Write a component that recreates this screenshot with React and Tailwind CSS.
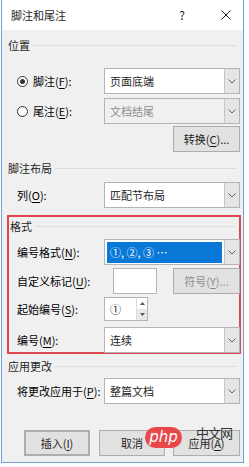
import React from 'react';

const font = { fontFamily: '"Noto Sans CJK SC", "Microsoft YaHei", sans-serif' };

const Arrow = () => (
  <div className="w-[15px] h-full bg-[#e5e5e5] border-l border-[#c4c4c4] flex items-center justify-center">
    <svg width="8" height="5" viewBox="0 0 8 5"><path d="M0.5 0.5 L4 4 L7.5 0.5" fill="none" stroke="#606060" strokeWidth="1" /></svg>
  </div>
);

const Combo = ({ text, disabled, selected, className = '' }) => (
  <div className={`ml-auto w-[136px] h-[26px] border border-[#b4b4b4] flex ${disabled ? 'bg-[#f0f0f0]' : 'bg-white'} ${className}`}>
    <div className="flex-1 flex items-center px-[2px]">
      {selected ? (
        <div className="w-full h-[21px] bg-[#0a78d7] text-white flex items-center px-[3px]">{text}</div>
      ) : (
        <span className={`px-[3px] ${disabled ? 'text-[#8d8d8d]' : 'text-[#1e1e1e]'}`}>{text}</span>
      )}
    </div>
    <Arrow />
  </div>
);

const Section = ({ label, className = '' }) => (
  <div className={`flex items-center gap-[3px] pr-[4px] ${className}`}>
    <span className="text-[#1e1e1e] leading-[14px]">{label}</span>
    <div className="flex-1 h-px bg-[#dcdcdc]" />
  </div>
);

const Button = ({ children, className = '' }) => (
  <div className={`h-[26px] bg-[#e1e1e1] border border-[#adadad] flex items-center justify-center text-[#1e1e1e] ${className}`}>{children}</div>
);

const Radio = ({ checked }) => (
  <div className="w-[11px] h-[11px] rounded-full border border-[#333] bg-white flex items-center justify-center">
    {checked && <div className="w-[5px] h-[5px] rounded-full bg-[#333]" />}
  </div>
);

const U = ({ children }) => <span className="underline underline-offset-2">{children}</span>;

export default function App() {
  return (
    <div className="w-[249px] h-[467px] bg-white relative text-[11px]" style={font}>
      <div className="ml-[1px] w-[243px] h-[463px] border-l border-r border-b border-[#6ea1dc] flex flex-col">
        {/* title bar */}
        <div className="h-[30px] bg-white flex items-center pl-[9px] text-[#1e1e1e]">
          <span className="text-[11px]">脚注和尾注</span>
          <span className="ml-auto mr-[36px] text-[12px]">?</span>
          <svg className="mr-[12px]" width="10" height="10" viewBox="0 0 10 10"><path d="M0.5 0.5 L9.5 9.5 M9.5 0.5 L0.5 9.5" stroke="#222" strokeWidth="1" /></svg>
        </div>

        {/* body */}
        <div className="flex-1 bg-[#f0f0f0] pl-[6px] pr-[2px] flex flex-col">
          <Section label="位置" className="mt-[8px]" />

          <div className="mt-[16px] flex items-center pr-[1px]">
            <div className="ml-[9px]"><Radio checked /></div>
            <span className="ml-[5px]">脚注(<U>F</U>):</span>
            <Combo text="页面底端" />
          </div>
          <div className="mt-[4px] flex items-center pr-[1px]">
            <div className="ml-[9px]"><Radio /></div>
            <span className="ml-[5px]">尾注(<U>E</U>):</span>
            <Combo text="文档结尾" disabled />
          </div>
          <div className="mt-[2px] flex pr-[1px]">
            <Button className="ml-auto w-[67px]">转换(<U>C</U>)...</Button>
          </div>

          <Section label="脚注布局" className="mt-[9px]" />
          <div className="mt-[7px] flex items-center pr-[1px]">
            <span className="ml-[9px]">列(<U>O</U>):</span>
            <Combo text="匹配节布局" />
          </div>

          {/* highlighted format section */}
          <div className="mt-[7px] -ml-[1px] h-[139px] border-2 border-[#e0464f] pl-[1px] flex flex-col">
            <Section label="格式" className="mt-[2px]" />
            <div className="mt-[6px] flex items-center">
              <span className="ml-[7px]">编号格式(<U>N</U>):</span>
              <Combo text="①, ②, ③ …" selected className="mr-[-1px]" />
            </div>
            <div className="mt-[3px] flex items-center">
              <span className="ml-[7px]">自定义标记(<U>U</U>):</span>
              <div className="ml-[23px] w-[44px] h-[26px] bg-white border border-[#b4b4b4]" />
              <Button className="ml-auto mr-[-1px] w-[67px] text-[#8d8d8d]">符号(<U>Y</U>)...</Button>
            </div>
            <div className="mt-[3px] flex items-center">
              <span className="ml-[7px]">起始编号(<U>S</U>):</span>
              <div className="ml-auto mr-[91px] w-[44px] h-[24px] bg-white border border-[#b4b4b4] flex">
                <span className="flex-1 flex items-center pl-[5px] text-[#1e1e1e]">①</span>
                <div className="w-[11px] flex flex-col border-l border-[#dcdcdc]">
                  <div className="flex-1 flex items-center justify-center">
                    <svg width="5" height="3" viewBox="0 0 5 3"><path d="M0 3 L2.5 0 L5 3Z" fill="#555" /></svg>
                  </div>
                  <div className="flex-1 flex items-center justify-center bg-[#e8e8e8]">
                    <svg width="5" height="3" viewBox="0 0 5 3"><path d="M0 0 L2.5 3 L5 0Z" fill="#555" /></svg>
                  </div>
                </div>
              </div>
            </div>
            <div className="mt-[6px] flex items-center">
              <span className="ml-[7px]">编号(<U>M</U>):</span>
              <Combo text="连续" className="mr-[-1px] h-[24px]" />
            </div>
          </div>

          <Section label="应用更改" className="mt-[5px]" />
          <div className="mt-[5px] flex items-center pr-[1px]">
            <span className="ml-[9px]">将更改应用于(<U>P</U>):</span>
            <Combo text="整篇文档" />
          </div>

          <div className="mt-[26px] flex pr-[1px]">
            <Button className="ml-[16px] w-[66px] border-2 border-[#0a6fc9]">插入(<U>I</U>)</Button>
            <Button className="ml-[9px] w-[66px]">取消</Button>
            <Button className="ml-auto w-[67px]">应用(<U>A</U>)</Button>
          </div>
        </div>
      </div>

      {/* watermark */}
      <div className="absolute left-[145px] top-[427px] w-[37px] h-[21px] rounded-full bg-[#e8484a] flex items-center justify-center">
        <span className="text-white italic text-[15px] leading-none" style={{ fontFamily: '"DejaVu Sans", sans-serif' }}>php</span>
      </div>
      <div className="absolute left-[196px] top-[426px] text-[13px] text-[#333] leading-none tracking-[-1px]">中文网</div>
    </div>
  );
}
